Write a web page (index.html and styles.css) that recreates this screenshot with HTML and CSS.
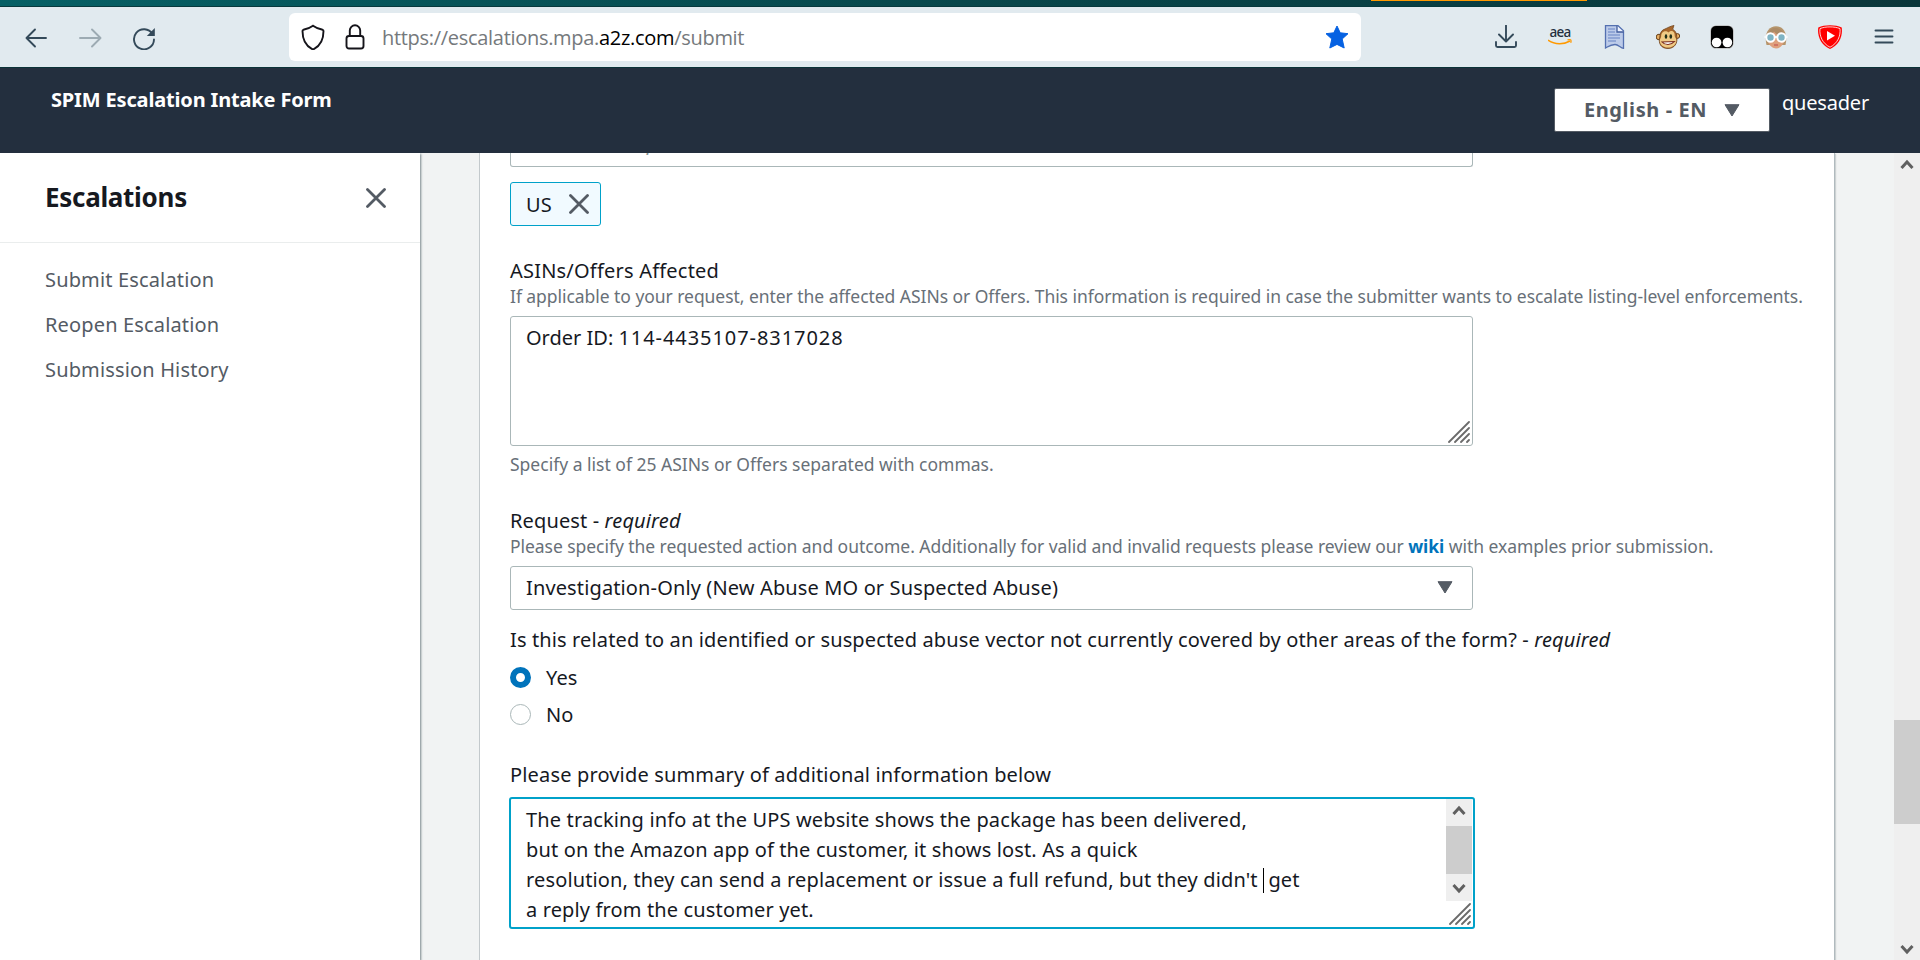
FILE: index.html
```
<!DOCTYPE html>
<html lang="en">
<head>
  <meta charset="UTF-8" />
  <meta name="viewport" content="width=device-width, initial-scale=1.0"/>
  <title>SPIM Escalation Intake Form</title>
  <link rel="stylesheet" href="styles.css">
</head>
<body>
  <div class="tabstrip"><span class="tab-line"></span></div>

  <div class="toolbar">
    <div class="nav-buttons">
      <svg width="24" height="24" viewBox="0 0 24 24"><path d="M22 12H2.5M11 3.5L2.5 12l8.5 8.5"/></svg>
      <svg class="disabled" width="24" height="24" viewBox="0 0 24 24"><path d="M2 12h20M14 3.5l8.500 8.500-8.500 8.500"/></svg>
      <svg width="24" height="24" viewBox="0 0 24 24"><path d="M20.500 8A10 10 0 1 0 22 13.500"/><path class="solid" d="M22.800 2v8h-8z"/></svg>
    </div>

    <div class="urlbar">
      <svg class="shield" width="24" height="26" viewBox="0 0 24 26"><path d="M12 1.800C9 4 5.500 5.300 2.400 5.800 1.800 6 1.500 6.400 1.500 7c0 8 3 14.500 9.300 17.800.8.400 1.600.4 2.400 0C19.500 21.500 22.500 15 22.500 7c0-.6-.3-1-.9-1.200C18.500 5.300 15 4 12 1.800z"/></svg>
      <svg class="lock" width="20" height="26" viewBox="0 0 20 26"><rect x="1.500" y="12" width="17" height="12.500" rx="2.500"/><path d="M4.800 12V6.500a5.200 5.200 0 0 1 10.400 0V12"/></svg>
      <span class="url">https://escalations.mpa.<b>a2z.com</b>/submit</span>
      <svg class="star" width="24" height="24" viewBox="0 0 24 24"><path d="M12 1l3.200 6.800 7.800.9-5.800 5.300 2 9L12 19.400 4.800 23l2-9L1 8.700l7.800-.9z"/></svg>
    </div>

    <div class="extensions">
      <svg class="line" width="24" height="24" viewBox="0 0 24 24"><path d="M12 .5v15.500M5 9.500l7 7 7-7M2 17v3.500c0 1 .6 1.500 1.500 1.500h17c.9 0 1.500-.5 1.500-1.500V17"/></svg>
      <svg width="24" height="24" viewBox="0 0 24 24"><text x="12" y="12" class="aea">aea</text><path d="M0 15c7 5 16 4.500 22 1" fill="none" stroke="#ff9900" stroke-width="1.500"/><path d="M19.500 14.800c3-.6 4.200-.3 3.200 3" fill="none" stroke="#ff9900" stroke-width="1.300"/></svg>
      <svg width="24" height="24" viewBox="0 0 24 24"><path d="M3.500.7H16l5.500 5v17.600c-3-.2-5-3.800-8.500-3.800-4 0-6 1.500-9.500 3.500z" fill="#bccbe9" stroke="#5470b0" stroke-width="1.300"/><path d="M15 .7v6.300h6.500" fill="#eef3ff" stroke="#405c9c" stroke-width="1.300"/><path d="M6 4h7M6 7h7M6 10h12M6 13h12M6 16h8" stroke="#6683c3" stroke-width="1.200"/></svg>
      <svg width="24" height="24" viewBox="0 0 24 24"><circle cx="3" cy="12" r="2.800" fill="#e7ae63" stroke="#65401c"/><circle cx="21.300" cy="11" r="2.400" fill="#e7ae63" stroke="#65401c"/><path d="M9 4c2.500-1 5-2.800 9-3.500-.7 1.300-.5 2.500-1.500 3.700 2.500 1.300 4.200 3.500 4.200 7.300C22 18 18.500 23.500 12 23.500S2 19 3.800 12C4 8 5.500 5 9 4z" fill="#a8662a" stroke="#6e4219" stroke-width=".8"/><path d="M12.500 7.500c2.500-3 6.500-1.500 6.200 3 0 2 2 2.700 1.600 5.700-.6 4-4.300 6.300-8.300 6.300S4.300 20.200 3.800 16.200c-.3-2.500 1.600-3.200 1.400-5.200-.2-4 4.500-6.500 7.300-3.500z" fill="#f0cb85"/><ellipse cx="10" cy="11.500" rx="1.300" ry="2.200" fill="#213018"/><ellipse cx="14.800" cy="11.500" rx="1.300" ry="2.200" fill="#213018"/><path d="M6 17c3 3.500 9 3.500 12.500-.5z" fill="#fff" stroke="#7a2a18" stroke-width="1.100"/></svg>
      <svg width="24" height="24" viewBox="0 0 24 24"><rect x=".5" y=".5" width="23" height="23" rx="5.500" fill="#000" stroke="#fff" stroke-width=".6"/><circle cx="6.600" cy="17.500" r="4.800" fill="#fff"/><circle cx="17.400" cy="17.500" r="4.800" fill="#fff"/></svg>
      <svg width="24" height="24" viewBox="0 0 24 24"><path d="M2.500 20C0 9 4 1.300 12 1.300S24 9 21.500 20z" fill="#b5956c"/><ellipse cx="12" cy="14.500" rx="8" ry="9" fill="#dea07c"/><path d="M3 11.500C4 5 8 3 11 3c4 0 9 2.500 10 8-5 .5-9-1.500-11-4.500-1.500 2.500-4 4.500-7 5z" fill="#ad8b66"/><path d="M0 12h24" stroke="#eef4f6" stroke-width="2"/><circle cx="6.500" cy="12.500" r="4.200" fill="#7fb4c4" stroke="#fff" stroke-width="2"/><circle cx="17.500" cy="12.500" r="4.200" fill="#7fb4c4" stroke="#fff" stroke-width="2"/><path d="M10 20h4" stroke="#c95d55" stroke-width="1.300"/></svg>
      <svg width="24" height="24" viewBox="0 0 24 24"><path d="M12 .3c4.500 0 8.500.7 11.700 2.200C25 11.500 21 20 12 24 3 20-1 11.500.3 2.500 3.500 1 7.500.3 12 .3z" fill="#f00"/><path d="M12 1.900c3.800 0 7 .5 10 1.700C22.800 11 19.500 18.500 12 22.200 4.500 18.500 1.200 11 2 3.600c3-1.200 6.200-1.700 10-1.700z" fill="none" stroke="#fff" stroke-width=".8"/><path d="M9 6v9.500l8-4.700z" fill="#fff"/></svg>
      <svg class="line" width="24" height="24" viewBox="0 0 24 24"><path d="M3.500 5.500h17M3.500 11.500h17M3.500 17.500h17"/></svg>
    </div>
  </div>

  <header class="header">
    <h1>SPIM Escalation Intake Form</h1>
    <div class="header-right">
      <button class="language">English - EN
        <svg width="16" height="13" viewBox="0 0 16 13"><path d="M1 .7h14L8 12z"/></svg>
      </button>
      <span class="user">quesader</span>
    </div>
  </header>

  <div class="layout">
    <aside class="sidebar">
      <div class="sidebar-title">
        <h2>Escalations</h2>
        <svg class="close" width="20" height="20" viewBox="0 0 20 20"><path d="M1.500 1.500l17 17M18.500 1.500l-17 17"/></svg>
      </div>
      <nav>
        <a>Submit Escalation</a>
        <a>Reopen Escalation</a>
        <a>Submission History</a>
      </nav>
    </aside>

    <main class="content">
      <form class="card">
        <div class="field marketplace"><i>Select marketplace</i></div>
        <div class="token">US
          <svg class="close" width="20" height="20" viewBox="0 0 20 20"><path d="M1.500 1.500l17 17M18.500 1.500l-17 17"/></svg>
        </div>

        <div class="label first">ASINs/Offers Affected</div>
        <div class="hint">If applicable to your request, enter the affected ASINs or Offers. This information is required in case the submitter wants to escalate listing-level enforcements.</div>
        <div class="field area">
          Order ID: <span class="order">114-4435107-8317028</span>
          <svg class="grip" width="22" height="22" viewBox="0 0 22 22"><path d="M1 21L21 1M7 21L21 7M13 21l8-8M19 21l2-2"/></svg>
        </div>
        <div class="hint below">Specify a list of 25 ASINs or Offers separated with commas.</div>

        <div class="label request">Request - <i>required</i></div>
        <div class="hint">Please specify the requested action and outcome. Additionally for valid and invalid requests please review our <a class="wiki">wiki</a> with examples prior submission.</div>
        <div class="field select">
          <span>Investigation-Only (New Abuse MO or Suspected Abuse)</span>
          <svg width="16" height="13" viewBox="0 0 16 13"><path d="M1 .7h14L8 12z"/></svg>
        </div>

        <div class="label question">Is this related to an identified or suspected abuse vector not currently covered by other areas of the form? - <i>required</i></div>
        <div class="radio"><span class="dot checked"></span>Yes</div>
        <div class="radio"><span class="dot"></span>No</div>

        <div class="label summary">Please provide summary of additional information below</div>
        <div class="field area focused">
          <p>The tracking info at the UPS website shows the package has been delivered,<br>
          but on the Amazon app of the customer, it shows lost. As a quick<br>
          resolution, they can send a replacement or issue a full refund, but they didn't <span class="caret"></span>&nbsp;get<br>
          a reply from the customer yet.</p>
          <div class="area-scroll">
            <svg width="14" height="11" viewBox="0 0 14 11"><path d="M1.500 9L7 3l5.500 6"/></svg>
            <span class="area-thumb"></span>
            <svg width="14" height="11" viewBox="0 0 14 11"><path d="M1.500 2L7 8l5.500-6"/></svg>
          </div>
          <svg class="grip" width="22" height="22" viewBox="0 0 22 22"><path d="M1 21L21 1M7 21L21 7M13 21l8-8M19 21l2-2"/></svg>
        </div>
      </form>
    </main>

    <div class="page-scroll">
      <svg width="14" height="11" viewBox="0 0 14 11"><path d="M1.500 9L7 3l5.500 6"/></svg>
      <span class="page-thumb"></span>
      <svg width="14" height="11" viewBox="0 0 14 11"><path d="M1.500 2L7 8l5.500-6"/></svg>
    </div>
  </div>
</body>
</html>
```
FILE: styles.css
```
* {
  margin: 0;
  padding: 0;
  box-sizing: border-box;
}

body {
  height: 960px;
  overflow: hidden;
  display: flex;
  flex-direction: column;
  font-family: "Noto Sans", sans-serif;
  font-size: 20px;
  letter-spacing: 0.13px;
  color: #16191f;
  background-color: #fff;
}

svg {
  display: block;
  flex: none;
}

/* browser chrome */
.tabstrip {
  height: 7px;
  flex: none;
  background: linear-gradient(90deg, #066065, #08474b 50%, #0a363a);
  border-bottom: 1px solid #07393d;
}

.tab-line {
  display: block;
  width: 216px;
  height: 1px;
  margin-left: 1371px;
  background-color: #ff9900;
}

.toolbar {
  height: 61px;
  flex: none;
  display: flex;
  align-items: center;
  padding: 0 24px;
  background-color: #e1eaef;
  border-bottom: 1px solid #0b3338;
}

.nav-buttons {
  display: flex;
  gap: 30px;
  width: 265px;
  padding-top: 1px;
}

.nav-buttons svg,
.line {
  fill: none;
  stroke: #344a5a;
  stroke-width: 1.9;
  stroke-linecap: round;
  stroke-linejoin: round;
}

.nav-buttons .disabled {
  stroke: #9dabb3;
}

.nav-buttons .solid {
  fill: #344a5a;
  stroke: none;
}

.urlbar {
  width: 1072px;
  height: 48px;
  display: flex;
  align-items: center;
  padding: 0 12px;
  border-radius: 6px;
  background-color: #fff;
}

.shield,
.lock {
  fill: none;
  stroke: #15141a;
  stroke-width: 1.9;
}

.lock {
  margin-left: 20px;
}

.url {
  flex: 1;
  margin-left: 17px;
  padding-top: 1px;
  font-family: "Open Sans", sans-serif;
  letter-spacing: -0.3px;
  color: #75797c;
}

.url b {
  font-weight: 400;
  color: #000;
}

.star {
  fill: #0561e2;
  stroke: #0561e2;
  stroke-linejoin: round;
}

.extensions {
  display: flex;
  gap: 30px;
  margin-left: auto;
}

.aea {
  font-size: 13.5px;
  font-weight: 500;
  letter-spacing: -0.8px;
  text-anchor: middle;
  fill: #232f3e;
}

/* page header */
.header {
  height: 85px;
  flex: none;
  display: flex;
  justify-content: space-between;
  padding: 18px 51px 0 51px;
  background-color: #232f3e;
  color: #fff;
}

.header h1 {
  font-size: 20px;
  font-weight: 700;
  line-height: 28px;
  letter-spacing: -0.16px;
}

.header-right {
  display: flex;
  gap: 12px;
}

.language {
  width: 216px;
  height: 44px;
  margin-top: 2px;
  display: flex;
  align-items: center;
  justify-content: center;
  gap: 17px;
  padding-bottom: 2px;
  border: 1px solid #545b64;
  border-radius: 2px;
  background-color: #fff;
  font-family: inherit;
  font-size: 20px;
  font-weight: 700;
  letter-spacing: 0.6px;
  color: #545b64;
}

.language svg {
  margin-top: 2px;
}

.language svg,
.select svg {
  fill: #545b64;
  stroke: #545b64;
  stroke-linejoin: round;
}

.user {
  padding-top: 3px;
  line-height: 28px;
  letter-spacing: -0.2px;
}

/* page body */
.layout {
  flex: 1;
  display: flex;
  min-height: 0;
}

.sidebar {
  z-index: 1;
  width: 420px;
  background-color: #fff;
  box-shadow: 1px 1px 2px rgba(0, 28, 36, 0.5);
  clip-path: inset(0 -5px 0 0);
}

.sidebar-title {
  height: 90px;
  display: flex;
  align-items: center;
  justify-content: space-between;
  padding: 0 34px 0 45px;
  border-bottom: 1px solid #eaeded;
}

.sidebar h2 {
  padding-bottom: 1px;
  font-size: 26px;
  font-weight: 700;
  letter-spacing: -0.3px;
}

.close {
  fill: none;
  stroke: #545b64;
  stroke-width: 2.800;
  stroke-linecap: round;
}

.sidebar nav {
  display: flex;
  flex-direction: column;
  gap: 15px;
  padding: 22px 45px;
}

.sidebar nav a {
  line-height: 30px;
  letter-spacing: 0.15px;
  color: #545b64;
}

.content {
  flex: 1;
  padding: 0 59px;
  background-color: #f1f3f3;
}

.card {
  height: 100%;
  display: flex;
  flex-direction: column;
  align-items: flex-start;
  padding-left: 30px;
  background-color: #fff;
  border-left: 1px solid #c3c9cc;
  border-right: 1px solid #b0babe;
  box-shadow: 1px 1px 1px rgba(0, 28, 36, 0.15);
}

.field {
  width: 963px;
  flex: none;
  border: 1px solid #aab7b8;
  border-radius: 3px;
  background-color: #fff;
}

/* scrolled almost out of view, only the bottom edge shows */
.marketplace {
  height: 14px;
  overflow: hidden;
  padding-left: 15px;
  border-top: 0;
  border-radius: 0 0 3px 3px;
  color: #879596;
}

.marketplace i {
  display: block;
  margin-top: -25px;
  line-height: 30px;
}

.token {
  width: 91px;
  height: 44px;
  margin-top: 15px;
  display: flex;
  align-items: center;
  justify-content: space-between;
  padding: 0 11px 0 15px;
  border: 1px solid #00a1c9;
  border-radius: 3px;
  background-color: #f1faff;
}

.label {
  line-height: 29px;
  white-space: nowrap;
}

.label.first {
  margin-top: 30px;
  letter-spacing: 0.21px;
}

.label.request {
  margin-top: 30px;
}

.label.question {
  margin-top: 15px;
  margin-bottom: 1px;
}

.label.summary {
  margin-top: 31px;
  letter-spacing: 0.16px;
}

.hint {
  margin-top: -1px;
  font-size: 17.5px;
  line-height: 24px;
  padding-bottom: 1px;
  letter-spacing: -0.05px;
  white-space: nowrap;
  color: #687078;
}

.hint.below {
  margin-top: 6px;
  padding-bottom: 0;
  letter-spacing: 0;
}

.wiki {
  font-weight: 700;
  color: #0073bb;
}

.area {
  position: relative;
  height: 130px;
  margin-top: 7px;
  padding: 6px 15px;
  line-height: 30px;
  letter-spacing: 0;
}

.order {
  letter-spacing: 0.93px;
}

.grip {
  position: absolute;
  right: 2px;
  bottom: 2px;
  fill: none;
  stroke: #6b6b6b;
  stroke-width: 1.8;
  stroke-linecap: round;
}

.select {
  height: 44px;
  margin-top: 7px;
  display: flex;
  align-items: center;
  justify-content: space-between;
  padding: 0 19px 1px 15px;
}

.radio {
  height: 29px;
  margin-top: 8px;
  display: flex;
  align-items: center;
  gap: 15px;
}

.dot {
  width: 21px;
  height: 21px;
  border: 1.500px solid #aab7b8;
  border-radius: 50%;
}

.dot.checked {
  border: 6.500px solid #0073bb;
}

.focused {
  width: 966px;
  height: 132px;
  margin: 8px 0 0 -1px;
  display: flex;
  justify-content: space-between;
  padding: 6px 1px 0 15px;
  border: 2px solid #00a1c9;
  letter-spacing: 0.14px;
}

.focused p {
  white-space: nowrap;
}

.caret {
  position: absolute;
  width: 1px;
  height: 25px;
  margin-top: 3px;
  background-color: #000;
}

.area-scroll,
.page-scroll {
  width: 26px;
  display: flex;
  flex-direction: column;
  align-items: center;
  background-color: #efefef;
}

.area-scroll {
  height: 102px;
  margin-top: -6px;
  padding: 6px 0 7px;
  justify-content: space-between;
}

.area-scroll svg,
.page-scroll svg {
  fill: none;
  stroke: #606060;
  stroke-width: 3;
}

.area-thumb {
  width: 26px;
  height: 48px;
  background-color: #cdcdcd;
}

.page-scroll {
  padding: 6px 0 5px;
}

.page-thumb {
  width: 26px;
  height: 104px;
  margin: 550px 0 auto;
  background-color: #cdcdcd;
}
```
